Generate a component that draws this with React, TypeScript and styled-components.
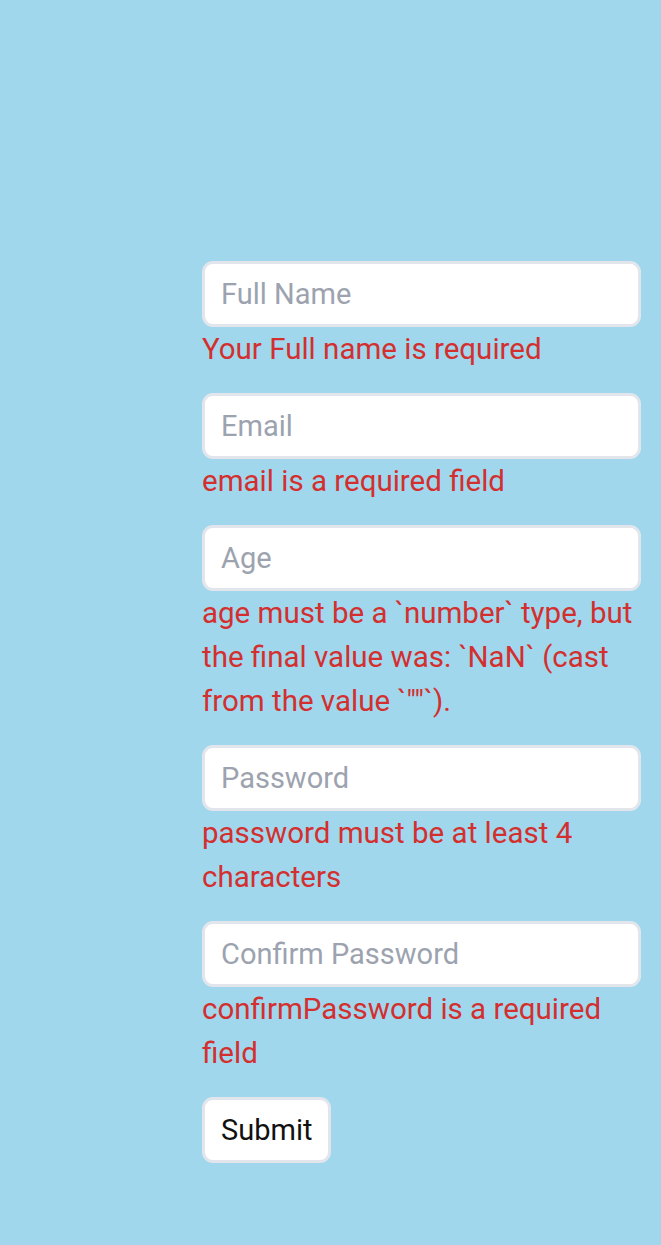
import React from "react";
import styled, { createGlobalStyle } from "styled-components";

const Global = createGlobalStyle`
  html, body { margin: 0; padding: 0; background: #a1d7ec; }
  body { font-family: Roboto, "Noto Sans", sans-serif; }
  * { box-sizing: border-box; }
`;

const Page = styled.div`
  min-height: 1245px;
  background: #a1d7ec;
  padding: 261px 20px 0 202px;
`;

const Form = styled.form`
  display: flex;
  flex-direction: column;
  gap: 22px;
`;

const Field = styled.div`
  display: flex;
  flex-direction: column;
`;

const Input = styled.input`
  height: 66px;
  width: 100%;
  border: 3px solid #e2e6ec;
  border-radius: 11px;
  background: #fff;
  padding: 0 16px;
  font-family: Roboto, sans-serif;
  font-size: 29px;
  color: #111;
  outline: none;
  &::placeholder { color: #9ca3af; }
`;

const Error = styled.p`
  margin: 0;
  color: #d32f2f;
  font-size: 29.5px;
  line-height: 44px;
`;

const Button = styled.button`
  align-self: flex-start;
  height: 66px;
  padding: 0 16px;
  border: 3px solid #e2e6ec;
  border-radius: 11px;
  background: #fff;
  font-family: Roboto, sans-serif;
  font-size: 29px;
  color: #111;
`;

const fields = [
  { ph: "Full Name", err: "Your Full name is required" },
  { ph: "Email", err: "email is a required field" },
  { ph: "Age", err: 'age must be a `number` type, but the final value was: `NaN` (cast from the value `""`).' },
  { ph: "Password", err: "password must be at least 4 characters" },
  { ph: "Confirm Password", err: "confirmPassword is a required field" },
];

export default function App() {
  return (
    <>
      <Global />
      <Page>
        <Form onSubmit={(e) => e.preventDefault()}>
          {fields.map((f) => (
            <Field key={f.ph}>
              <Input placeholder={f.ph} />
              <Error>{f.err}</Error>
            </Field>
          ))}
          <Button type="submit">Submit</Button>
        </Form>
      </Page>
    </>
  );
}
